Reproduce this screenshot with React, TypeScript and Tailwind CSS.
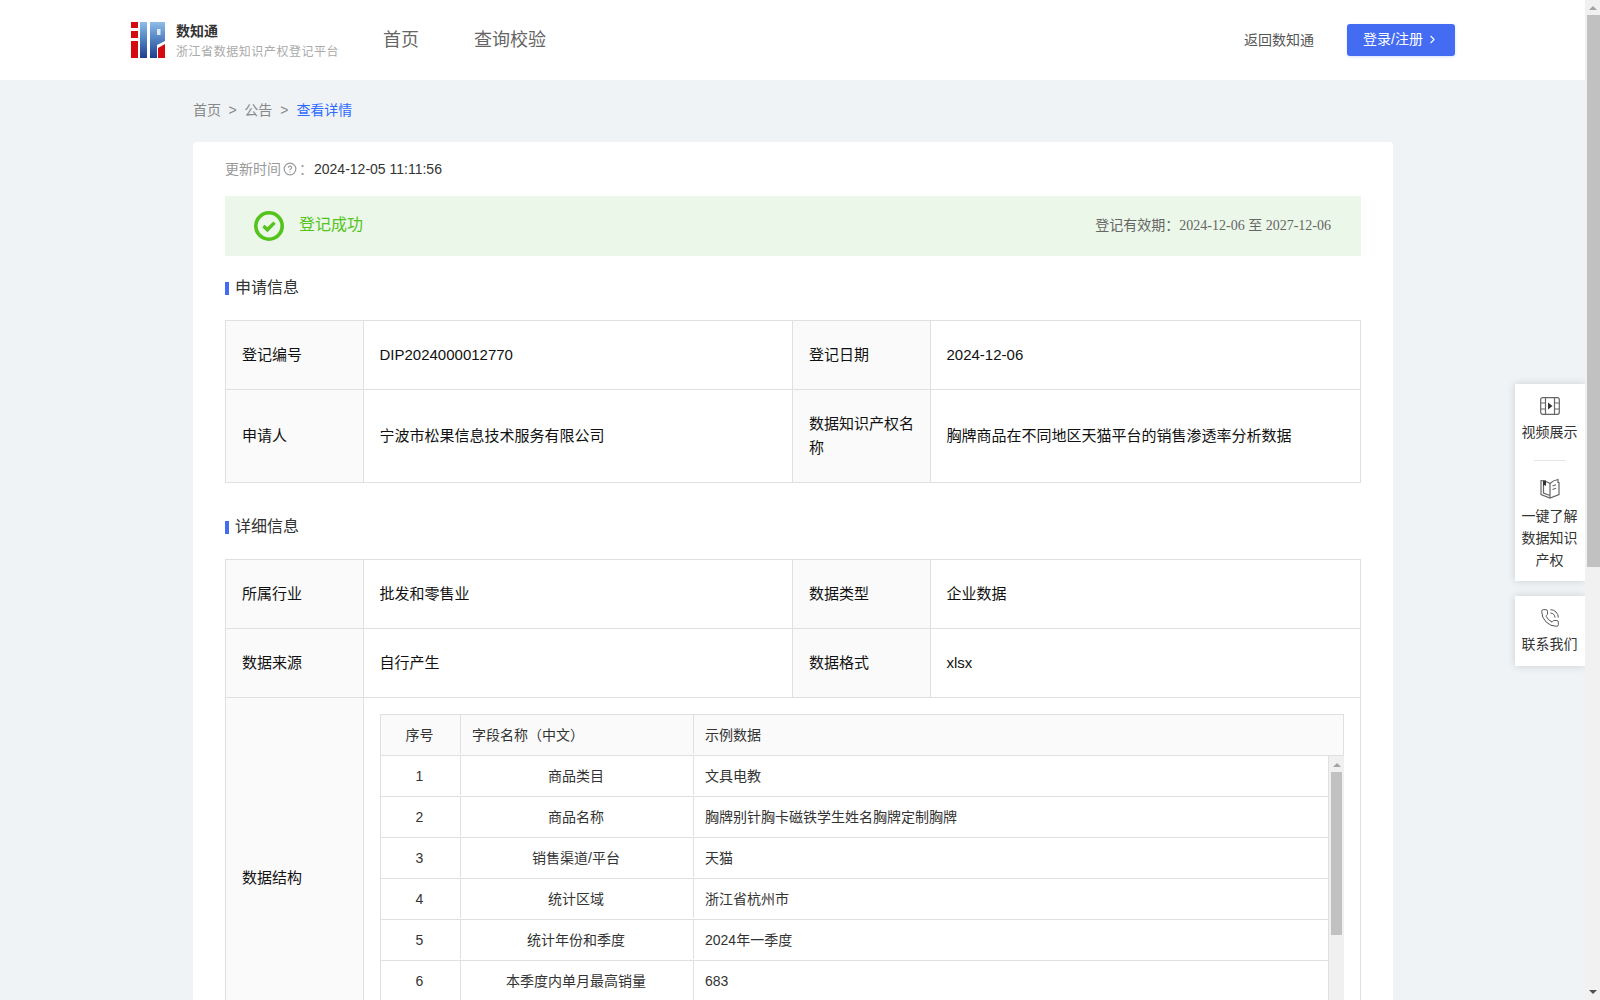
import { ChevronRight, CircleHelp, PhoneCall } from 'lucide-react';

const rows = [
  { no: 1, name: '商品类目', demo: '文具电教' },
  { no: 2, name: '商品名称', demo: '胸牌别针胸卡磁铁学生姓名胸牌定制胸牌' },
  { no: 3, name: '销售渠道/平台', demo: '天猫' },
  { no: 4, name: '统计区域', demo: '浙江省杭州市' },
  { no: 5, name: '统计年份和季度', demo: '2024年一季度' },
  { no: 6, name: '本季度内单月最高销量', demo: '683' },
];

function Logo() {
  return (
    <svg width="34" height="36" viewBox="0 0 34 36" className="shrink-0">
      <defs>
        <linearGradient id="logoBlue" x1="0" y1="0" x2="0" y2="1">
          <stop offset="0" stopColor="#8fbde8" />
          <stop offset="0.5" stopColor="#4f7fc0" />
          <stop offset="1" stopColor="#1f3f8f" />
        </linearGradient>
      </defs>
      <rect x="0" y="0" width="7" height="6" fill="#d40c12" />
      <rect x="0" y="9" width="7" height="7" fill="#d40c12" />
      <rect x="0" y="19" width="7" height="17" fill="#d40c12" />
      <rect x="9" y="0" width="7" height="36" fill="url(#logoBlue)" />
      <path d="M19 0H34V19L26 23V36H19Z" fill="url(#logoBlue)" />
      <rect x="26" y="7" width="3.5" height="6" fill="#dbe9f7" />
      <path d="M27 26L34 22V36H27Z" fill="#d40c12" />
    </svg>
  );
}

function VideoIcon() {
  return (
    <svg width="20" height="18" viewBox="0 0 20 18" fill="none" stroke="#666" strokeWidth="1.2">
      <rect x="0.7" y="0.7" width="18.6" height="16.6" rx="2" />
      <path d="M5.5 1V17M14.5 1V17M1 6H5.5M1 12H5.5M14.5 6H19M14.5 12H19" />
      <path d="M8 5.5L12.5 9L8 12.5Z" fill="#333" stroke="none" />
    </svg>
  );
}

function BookIcon() {
  return (
    <svg width="20" height="21" viewBox="0 0 20 21" fill="none" stroke="#666" strokeWidth="1.2">
      <path d="M1 2.5C4 2.5 7 3.5 10 5.5C12 3.5 15 2 18 1.5V4.5H19V16.5L10 20L1 16.5Z" />
      <path d="M10 5.5V20M3.5 2.8V15L10 17.5" />
      <path d="M3 2.5H6V8L4.5 7L3 8Z" fill="#333" stroke="none" />
      <path d="M12.5 8L16 6.8M12.5 11.5L16 10.3" />
    </svg>
  );
}

function CheckBadge() {
  return (
    <svg width="30" height="30" viewBox="0 0 30 30" fill="none" className="shrink-0">
      <circle cx="15" cy="15" r="13.2" stroke="#52c41a" strokeWidth="3.6" />
      <path d="M9.5 15L13.4 18.8L20.5 11.6" stroke="#52c41a" strokeWidth="3.4" />
    </svg>
  );
}

function SectionTitle({ title, className }: { title: string; className: string }) {
  return (
    <div className={`flex items-center h-[26px] ${className}`}>
      <span className="w-1 h-[13px] bg-[#436cf3] mt-[3px]" />
      <span className="ml-[6px] mt-[2px] text-base text-[#333]">{title}</span>
    </div>
  );
}

const labelCell = 'border border-[#e0e0e0] bg-[#fafafa] px-4 pb-px text-[15px] leading-6 text-[#111]';
const valueCell = 'border border-[#e0e0e0] pl-[15.5px] pr-4 pb-px text-[15px] leading-6 text-[#111]';

function OuterCols() {
  return (
    <colgroup>
      <col className="w-[138px]" />
      <col className="w-[429px]" />
      <col className="w-[138px]" />
      <col />
    </colgroup>
  );
}

function StructureTable() {
  return (
    <div className="border-x border-t border-[#e0e0e0] text-sm text-[#333]">
      <div className="flex h-[41px] pb-px bg-[#fafafa] border-b border-[#e0e0e0]">
        <div className="w-[80px] flex items-center justify-center pr-[2px] border-r border-[#e0e0e0]">序号</div>
        <div className="w-[233px] flex items-center pl-[11px] border-r border-[#e0e0e0]">字段名称（中文）</div>
        <div className="flex-1 flex items-center pl-[11px]">示例数据</div>
      </div>
      <div className="flex h-[286px]">
        <div className="flex-1">
          {rows.map(r => (
            <div key={r.no} className="flex h-[41px] pb-px border-b border-[#e0e0e0]">
              <div className="w-[80px] flex items-center justify-center pr-[2px] border-r border-[#e0e0e0]">{r.no}</div>
              <div className="w-[233px] flex items-center justify-center pr-[2px] border-r border-[#e0e0e0]">{r.name}</div>
              <div className="flex-1 flex items-center pl-[11px]">{r.demo}</div>
            </div>
          ))}
        </div>
        <div className="w-[16px] -mr-px bg-[#f0f0f0] border-l border-[#e0e0e0] flex flex-col items-center pt-[7px]">
          <span className="w-0 h-0 border-x-[4px] border-x-transparent border-b-[4px] border-b-[#a3a3a3] mb-[5px]" />
          <span className="w-[11px] h-[163px] bg-[#c1c1c1]" />
        </div>
      </div>
    </div>
  );
}

function SideWidget() {
  return (
    <div className="absolute right-0 top-[384px] w-[70px] text-sm leading-[22px] text-[#333] text-center">
      <div className="bg-white shadow-[0_0_8px_rgba(0,0,0,0.15)] pt-[13px] pb-[10px]">
        <div className="flex justify-center h-[18px]">
          <VideoIcon />
        </div>
        <div className="mt-[6px] pr-px">视频展示</div>
        <div className="w-8 h-px bg-[#e5e5e5] mx-auto mt-[17px] mb-[17px]" />
        <div className="flex justify-center h-[21px]">
          <BookIcon />
        </div>
        <div className="mt-[6px] pr-px">一键了解<br />数据知识<br />产权</div>
      </div>
      <div className="bg-white shadow-[0_0_8px_rgba(0,0,0,0.15)] mt-[15px] h-[70px] pt-3">
        <div className="flex justify-center h-5">
          <PhoneCall size={20} strokeWidth={1.2} color="#555" />
        </div>
        <div className="mt-[5px] pr-px">联系我们</div>
      </div>
    </div>
  );
}

export default function App() {
  return (
    <div className="h-screen flex overflow-hidden font-['Liberation_Sans','Noto_Sans_CJK_SC',sans-serif]">
      <div className="flex-1 relative overflow-hidden bg-[#eff3f6]">
        {/* Header */}
        <div className="h-20 bg-white flex items-center pl-[131px] pr-[130px]">
          <Logo />
          <div className="ml-[11px] mt-[2px] w-[207px]">
            <div className="text-sm font-bold text-[#333] leading-5">数知通</div>
            <div className="text-xs tracking-[0.55px] text-[#aaa] leading-5 mt-px">浙江省数据知识产权登记平台</div>
          </div>
          <div className="text-lg text-[#666]">首页</div>
          <div className="text-lg text-[#666] ml-[55px]">查询校验</div>
          <div className="ml-auto text-sm text-[#555] mr-px pb-px">返回数知通</div>
          <button className="ml-8 w-[108px] h-8 rounded-[3px] bg-[#436cf3] text-white text-sm flex items-center justify-center gap-[3px] pb-[2px] shadow-[0_1px_3px_rgba(67,108,243,0.2)]">
            登录/注册
            <ChevronRight size={13} />
          </button>
        </div>

        <div className="w-[1200px] ml-[193px]">
          {/* Breadcrumb */}
          <div className="h-[62px] flex items-center text-sm pb-[2px] text-[#888]">
            <span>首页</span>
            <span className="mx-[7.5px]">&gt;</span>
            <span>公告</span>
            <span className="mx-2">&gt;</span>
            <span className="text-[#2f6bff]">查看详情</span>
          </div>

          {/* Card */}
          <div className="bg-white rounded px-8 pt-4 pb-8">
            <div className="flex items-center h-[22px] text-sm text-[#999]">
              更新时间
              <CircleHelp size={14} className="mx-[2px]" />
              ：<span className="text-[#333] ml-px">2024-12-05 11:11:56</span>
            </div>

            <div className="mt-4 h-[60px] bg-[#ebf7e8] flex items-center pl-[29px] pr-[30px]">
              <CheckBadge />
              <span className="ml-[15px] pb-[2px] text-base text-[#52c41a]">登记成功</span>
              <span className="ml-auto pb-[2px] text-sm text-[#666]">
                登记有效期：
                <span className="font-['Liberation_Serif','Noto_Sans_CJK_SC',serif]">2024-12-06 至 2027-12-06</span>
              </span>
            </div>

            <SectionTitle title="申请信息" className="mt-[18px] mb-5" />
            <table className="w-full table-fixed border-collapse">
              <OuterCols />
              <tbody>
                <tr className="h-[69px]">
                  <td className={labelCell}>登记编号</td>
                  <td className={valueCell}>DIP2024000012770</td>
                  <td className={labelCell}>登记日期</td>
                  <td className={valueCell}>2024-12-06</td>
                </tr>
                <tr className="h-[93px]">
                  <td className={labelCell}>申请人</td>
                  <td className={valueCell}>宁波市松果信息技术服务有限公司</td>
                  <td className={labelCell}>数据知识产权名称</td>
                  <td className={valueCell}>胸牌商品在不同地区天猫平台的销售渗透率分析数据</td>
                </tr>
              </tbody>
            </table>

            <SectionTitle title="详细信息" className="mt-[30px] mb-5" />
            <table className="w-full table-fixed border-collapse">
              <OuterCols />
              <tbody>
                <tr className="h-[69px]">
                  <td className={labelCell}>所属行业</td>
                  <td className={valueCell}>批发和零售业</td>
                  <td className={labelCell}>数据类型</td>
                  <td className={valueCell}>企业数据</td>
                </tr>
                <tr className="h-[69px]">
                  <td className={labelCell}>数据来源</td>
                  <td className={valueCell}>自行产生</td>
                  <td className={labelCell}>数据格式</td>
                  <td className={valueCell}>xlsx</td>
                </tr>
                <tr>
                  <td className={labelCell}>数据结构</td>
                  <td colSpan={3} className="border border-[#e0e0e0] p-4">
                    <StructureTable />
                  </td>
                </tr>
              </tbody>
            </table>
          </div>
        </div>

        <SideWidget />
      </div>

      {/* Window scrollbar */}
      <div className="w-[15px] bg-[#f1f1f1] flex flex-col items-center relative">
        <span className="w-0 h-0 border-x-[4px] border-x-transparent border-b-[4px] border-b-[#a3a3a3] mt-[6px] mb-[5px]" />
        <span className="w-[13px] h-[552px] bg-[#c1c1c1] self-end" />
        <span className="w-0 h-0 border-x-[4px] border-x-transparent border-t-[4px] border-t-[#505050] mt-auto mb-[6px]" />
      </div>
    </div>
  );
}
